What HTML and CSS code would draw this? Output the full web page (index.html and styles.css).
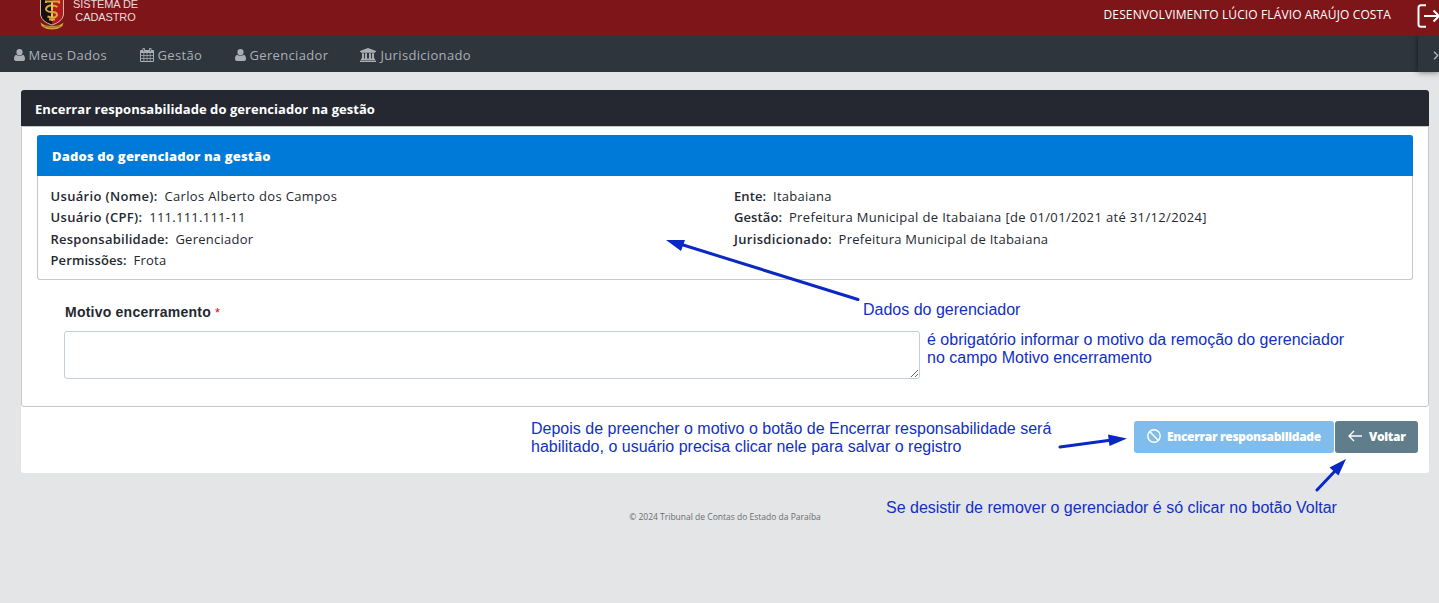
FILE: index.html
```html
<!DOCTYPE html>
<html lang="pt-BR">
<head>
<meta charset="utf-8">
<title>Sistema de Cadastro</title>
<link rel="stylesheet" href="styles.css">
</head>
<body>
<header class="topbar">
  <div class="brand">
    <svg class="crest" width="26" height="30" viewBox="0 0 26 30">
      <path d="M1.500 0H13V25Q3 22 1.500 15Z" fill="#17100f"/>
      <path d="M13 0H24.500V15Q23 22 13 25Z" fill="#b3191d"/>
      <path d="M1.500 0V15Q3 22 13 25Q23 22 24.500 15V0" fill="none" stroke="#c9b9a4" stroke-width="1"/>
      <path d="M7 3V1.500H20V3.500M13 1V21M18.500 7Q16 5 11 5.500Q7 6.500 7 9.500Q8 12 13 12Q18.500 12 18 15.500Q16 19 8.500 16.500M10 19.500H16" fill="none" stroke="#d8a83c" stroke-width="2"/>
      <path d="M13 3V10M13 14V17" stroke="#f3dc9a" stroke-width="1"/>
      <path d="M1.500 22.500Q5 26 13 26Q21 26 24.500 22.500L23.500 26Q19 29.500 13 29.500Q7 29.500 2.500 26Z" fill="#cfa235"/>
      <path d="M5 26Q13 29 21 26" fill="none" stroke="#8a5f20" stroke-width=".8"/>
    </svg>
    <div class="brand-name"><span>SISTEMA DE</span><span>CADASTRO</span></div>
  </div>
  <div class="session">
    <span class="user-name">DESENVOLVIMENTO LÚCIO FLÁVIO ARAÚJO COSTA</span>
    <svg class="logout" width="22" height="24" viewBox="0 0 22 24" fill="none" stroke="#fff" stroke-width="2">
      <path d="M9 1.200H4Q1.500 1.200 1.500 3.700V20.300Q1.500 22.800 4 22.800H9M7 12H22M16.500 6.500L22 12L16.500 17.500"/>
    </svg>
  </div>
</header>
<nav class="menu">
  <a class="item data"><svg class="user" width="11" height="12" viewBox="0 0 10 12" preserveAspectRatio="none"><path d="M5 0Q7.800 0 7.800 3Q7.800 6.400 5 6.400Q2.200 6.400 2.200 3Q2.200 0 5 0ZM2 5.800Q5 8.300 8 5.800Q10 6.500 10 10Q10 12 8.300 12H1.700Q0 12 0 10Q0 6.500 2 5.800Z"/></svg><span>Meus Dados</span></a>
  <a class="item mgmt"><svg width="14" height="14" viewBox="0 0 14 14"><path fill-rule="evenodd" d="M1 2H2.500V.8Q2.500 0 3.800 0Q5 0 5 .8V2H9V.8Q9 0 10.200 0Q11.500 0 11.500 .8V2H13Q14 2 14 3V13Q14 14 13 14H1Q0 14 0 13V3Q0 2 1 2ZM1 5V7H3.500V5ZM4.300 5V7H6.700V5ZM7.400 5V7H9.800V5ZM10.500 5V7H13V5ZM1 7.800V10H3.500V7.800ZM4.300 7.800V10H6.700V7.800ZM7.400 7.800V10H9.800V7.800ZM10.500 7.800V10H13V7.800ZM1 10.800V13H3.500V10.800ZM4.300 10.800V13H6.700V10.800ZM7.400 10.800V13H9.800V10.800ZM10.500 10.800V13H13V10.800ZM3.400 1V3.300H4.100V1ZM9.900 1V3.300H10.600V1Z"/></svg><span>Gestão</span></a>
  <a class="item manager"><svg class="user" width="11" height="12" viewBox="0 0 10 12" preserveAspectRatio="none"><path d="M5 0Q7.800 0 7.800 3Q7.800 6.400 5 6.400Q2.200 6.400 2.200 3Q2.200 0 5 0ZM2 5.800Q5 8.300 8 5.800Q10 6.500 10 10Q10 12 8.300 12H1.700Q0 12 0 10Q0 6.500 2 5.800Z"/></svg><span>Gerenciador</span></a>
  <a class="item juris"><svg width="16" height="14" viewBox="0 0 16 14"><path d="M8 0L16 3V4H15V4.700H1V4H0V3ZM2 5.300H4V10.600H5V5.300H7V10.600H9V5.300H11V10.600H12V5.300H14V10.600H15V12H1V10.600H2ZM0 12.500H16V14H0Z"/></svg><span>Jurisdicionado</span></a>
  <button class="next"><svg width="6" height="9" viewBox="0 0 6 9"><path d="M1 .8L4.800 4.500L1 8.200" fill="none" stroke="#b4b9be" stroke-width="1.300"/></svg></button>
</nav>
<main class="page">
  <section class="panel">
    <h1 class="panel-title"><span>Encerrar responsabilidade do gerenciador na gestão</span></h1>
    <div class="panel-body">
      <section class="card">
        <h2 class="card-title"><span>Dados do gerenciador na gestão</span></h2>
        <div class="details">
          <dl>
            <div class="row"><dt class="wide">Usuário (Nome):</dt><dd class="wider">Carlos Alberto dos Campos</dd></div>
            <div class="row"><dt class="wide">Usuário (CPF):</dt><dd>111.111.111-11</dd></div>
            <div class="row"><dt>Responsabilidade:</dt><dd>Gerenciador</dd></div>
            <div class="row"><dt class="snug">Permissões:</dt><dd>Frota</dd></div>
          </dl>
          <dl>
            <div class="row"><dt class="snug">Ente:</dt><dd>Itabaiana</dd></div>
            <div class="row"><dt class="snug">Gestão:</dt><dd class="wider">Prefeitura Municipal de Itabaiana [de 01/01/2021 até 31/12/2024]</dd></div>
            <div class="row"><dt class="wide">Jurisdicionado:</dt><dd>Prefeitura Municipal de Itabaiana</dd></div>
          </dl>
        </div>
      </section>
      <div class="field">
        <label for="reason">Motivo encerramento <span class="required">*</span></label>
        <textarea id="reason"></textarea>
      </div>
    </div>
    <div class="actions">
      <button class="btn end" disabled><svg width="14" height="14" viewBox="0 0 14 14" fill="none" stroke="#fff" stroke-width="1.400"><circle cx="7" cy="7" r="6.200"/><path d="M2.600 2.600L11.400 11.400"/></svg><span>Encerrar responsabilidade</span></button>
      <button class="btn back"><svg width="14" height="12" viewBox="0 0 14 12" fill="none" stroke="#fff" stroke-width="1.400"><path d="M14 6H1.200M6 1L1 6L6 11"/></svg><span>Voltar</span></button>
    </div>
  </section>
  <footer class="footer"><span>© 2024 Tribunal de Contas do Estado da Paraíba</span></footer>
</main>
<div class="notes">
  <svg class="arrows" width="1439" height="603" viewBox="0 0 1439 603" fill="#0a28c4" stroke="#0a28c4" stroke-linecap="round">
    <path d="M858 299.500L680 244M1060 447L1112 440M1317 490L1335 471" stroke-width="3" fill="none"/>
    <path d="M666 240L685 240L681 251ZM1127 438.500L1108 434.500L1109.500 446ZM1346 459L1329.500 467.500L1338.500 475.500Z" stroke="none"/>
  </svg>
  <p class="note n1">Dados do gerenciador</p>
  <p class="note n2">é obrigatório informar o motivo da remoção do gerenciador<br>no campo Motivo encerramento</p>
  <p class="note n3">Depois de preencher o motivo o botão de Encerrar responsabilidade será<br>habilitado, o usuário precisa clicar nele para salvar o registro</p>
  <p class="note n4">Se desistir de remover o gerenciador é só clicar no botão Voltar</p>
</div>
</body>
</html>
```

FILE: styles.css
```css
* { box-sizing: border-box; }
body {
  margin: 0;
  height: 603px;
  overflow: hidden;
  position: relative;
  background: #e4e5e6;
  color: #252830;
  font-family: "Open Sans", "Noto Sans", sans-serif;
  font-size: 13px;
}
h1, h2, dl, dd, p { margin: 0; }
span, dt, dd, .note { white-space: nowrap; }
svg { flex: none; display: block; }

.topbar {
  height: 36px;
  background: #7e1519;
  color: #fff;
  display: flex;
  justify-content: space-between;
}
.brand { display: flex; padding-left: 39px; }
.brand-name {
  display: flex;
  flex-direction: column;
  align-items: center;
  margin-left: 8px;
  margin-top: -2px;
  font: 11px/12.500px "Liberation Sans", Arial, sans-serif;
  letter-spacing: -.1px;
  color: #eadcdc;
}
.session { display: flex; }
.user-name { font-size: 12px; line-height: 29px; letter-spacing: .12px; margin-right: 26px; }
.logout { margin-top: 4px; }

.menu {
  height: 36px;
  background: #2e353d;
  color: #a9afb5;
  display: flex;
  align-items: center;
  padding-left: 14px;
}
.item {
  display: flex;
  align-items: center;
  gap: 3.500px;
  height: 36px;
  line-height: 36px;
  padding-top: 2px;
  letter-spacing: .33px;
}
.item svg { fill: #a9afb5; }
.data { width: 126px; }
.mgmt { width: 95px; }
.manager { width: 125px; }
.juris { gap: 4.500px; }
.next {
  margin-left: auto;
  width: 21px;
  height: 36px;
  padding: 2px 0 0 15px;
  border: 0;
  background: #2e353d;
  box-shadow: 0 0 6px rgba(0, 0, 0, .55);
  clip-path: inset(0 0 -8px -8px);
}

.page { padding: 18px 10px 0 21px; }
.panel { background: #fff; border-radius: 3px; height: 383px; }
.panel-title {
  height: 36px;
  padding: 0 14px;
  border-radius: 3px 3px 0 0;
  background: #252830;
  color: #fff;
  font-size: 13px;
  font-weight: 700;
  line-height: 38px;
  letter-spacing: .05px;
}
.panel-body {
  height: 281px;
  padding: 8px 15px 0;
  border: 1px solid #c8c8c8;
  border-radius: 0 0 3px 3px;
}
.card { height: 145px; border-radius: 3px; border: 1px solid #c8c8c8; border-top: 0; }
.card-title {
  height: 41px;
  margin: 0 -1px;
  padding: 0 15px;
  border-radius: 3px 3px 0 0;
  background: #007ad9;
  color: #fff;
  font-size: 13px;
  font-weight: 800;
  line-height: 43px;
  letter-spacing: .16px;
}
.details { display: grid; grid-template-columns: 683.500px 1fr; padding: 10px 12.500px; }
.row { display: flex; height: 21.400px; line-height: 21px; }
dt { font-weight: 600; margin-right: 6.800px; letter-spacing: .24px; }
dt.wide { letter-spacing: .33px; }
dt.snug { letter-spacing: .1px; }
dd { letter-spacing: .26px; }
dd.wider { letter-spacing: .35px; }

.field { padding: 22px 27px 0; }
.field label {
  display: block;
  height: 29px;
  padding-left: 1px;
  font: 700 14px/20px "Liberation Sans", Arial, sans-serif;
  letter-spacing: .23px;
}
.required { color: #f00; font-size: 13px; font-weight: 400; }
.field textarea {
  display: block;
  width: 856px;
  height: 48px;
  border: 1px solid #c2cfd8;
  border-radius: 3px;
  background: #fff;
  outline: 0;
}
.actions { display: flex; justify-content: flex-end; gap: 1px; padding: 14px 11px 0; }
.btn {
  height: 32px;
  border: 0;
  border-radius: 3px;
  color: #fff;
  display: flex;
  align-items: center;
  font: 800 12px/32px "Open Sans", sans-serif;
  letter-spacing: -.33px;
}
.end { width: 200px; padding: 0 0 2px 13px; gap: 6px; background: #80bcec; }
.back { width: 83px; padding: 0 0 2px 13px; gap: 7px; background: #607d8b; }
.btn span { padding-top: 1px; }
.footer {
  display: flex;
  justify-content: center;
  padding-top: 35px;
  color: #6a6d70;
  font-size: 8.500px;
  line-height: 18px;
}

/* Annotations drawn over the page */
.notes { position: absolute; inset: 0; pointer-events: none; }
.arrows { position: absolute; inset: 0; }
.note {
  position: absolute;
  color: #1230c0;
  font: 16px/18px "Liberation Sans", Arial, sans-serif;
}
.n1 { left: 863px; top: 301px; }
.n2 { left: 927px; top: 331px; }
.n3 { left: 531px; top: 420px; }
.n4 { left: 886px; top: 499px; }
```
